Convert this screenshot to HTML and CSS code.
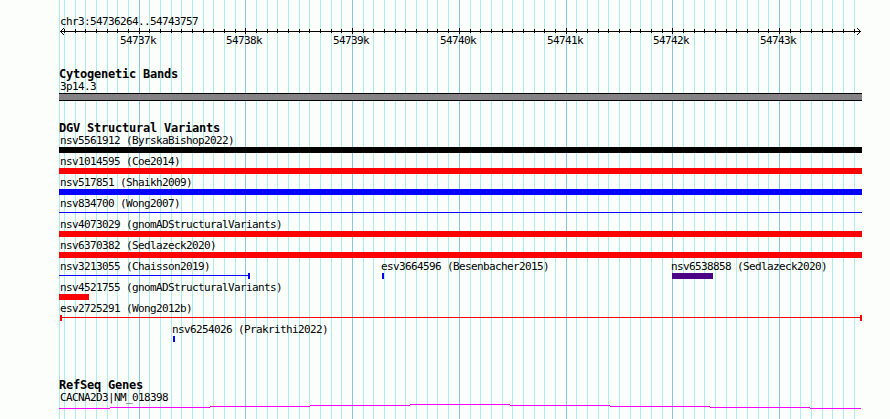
FILE: index.html
```
<!DOCTYPE html>
<html lang="en">
<head>
    <meta charset="UTF-8">
    <title>chr3:54736264..54743757</title>
    <link rel="stylesheet" href="styles.css">
</head>
<body>
    <div class="browser">
        <svg class="grid" width="890" height="419" shape-rendering="crispEdges"></svg>
        <header>
            <div class="label">chr3:54736264..54743757</div>
            <svg class="ruler" width="803" height="9" shape-rendering="crispEdges"></svg>
            <div class="scale"></div>
        </header>

        <section class="bands">
            <h2>Cytogenetic Bands</h2>
            <div class="label">3p14.3</div>
            <div class="band"></div>
        </section>

        <section class="variants">
            <h2>DGV Structural Variants</h2>
            <div class="row"><div class="label">nsv5561912 (ByrskaBishop2022)</div><div class="bar black"></div></div>
            <div class="row"><div class="label">nsv1014595 (Coe2014)</div><div class="bar red"></div></div>
            <div class="row"><div class="label">nsv517851 (Shaikh2009)</div><div class="bar blue"></div></div>
            <div class="row"><div class="label">nsv834700 (Wong2007)</div><div class="line thin blue"></div></div>
            <div class="row"><div class="label">nsv4073029 (gnomADStructuralVariants)</div><div class="bar red"></div></div>
            <div class="row"><div class="label">nsv6370382 (Sedlazeck2020)</div><div class="bar red"></div></div>
            <div class="row shared">
                <div><div class="label">nsv3213055 (Chaisson2019)</div><div class="span chaisson"><i class="line blue"></i><i class="cap blue"></i></div></div>
                <div><div class="label flush">esv3664596 (Besenbacher2015)</div><div class="cap blue"></div></div>
                <div><div class="label flush">nsv6538858 (Sedlazeck2020)</div><div class="bar indigo"></div></div>
            </div>
            <div class="row"><div class="label">nsv4521755 (gnomADStructuralVariants)</div><div class="bar short red"></div></div>
            <div class="row"><div class="label">esv2725291 (Wong2012b)</div><div class="span wong"><i class="cap red"></i><i class="line red"></i><i class="cap red"></i></div></div>
            <div class="row prakrithi"><div class="label flush">nsv6254026 (Prakrithi2022)</div><div class="cap blue"></div></div>
        </section>

        <section class="genes">
            <h2>RefSeq Genes</h2>
            <div class="label">CACNA2D3|NM_018398</div>
            <svg class="gene" width="803" height="5" shape-rendering="crispEdges">
                <path d="M0 4h51v1H0zM51 3h100v1H51zM151 2h100v1H151zM251 1h100v1H251zM351 0h100v1H351zM451 1h100v1H451zM551 2h100v1H551zM651 3h100v1H651zM751 4h51v1H751z"/>
            </svg>
        </section>
    </div>
    <script>
        const start = 54736264;
        const end = 54743757;
        const left = 59;
        const toX = bp => Math.round(60 + (bp - start) * 800 / (end - start + 1));
        const minor = [`M${left} 0h1v419h-1z`];
        const major = [];
        // axis line with an arrowhead at both ends
        const ticks = ['M1 4h801v1H1zM2 3h1v3H2zM3 2h1v1H3zM4 1h1v1H4zM3 6h1v1H3zM4 7h1v1H4zM800 3h1v3h-1zM799 2h1v1h-1zM798 1h1v1h-1zM799 6h1v1h-1zM798 7h1v1h-1z'];
        const labels = [];

        for (let bp = 54736300; bp < end; bp += 100) {
            const x = toX(bp);
            if (bp % 1000 === 0) {
                major.push(`M${x} 0h1v419h-1z`);
                ticks.push(`M${x - left} 1h1v6h-1z`);
                labels.push(`<span style="margin-left:${x - 19 - left - 107 * labels.length}px">${bp / 1000}k</span>`);
            } else {
                minor.push(`M${x} 0h1v419h-1z`);
                ticks.push(`M${x - left} 2h1v4h-1z`);
            }
        }

        document.querySelector('.grid').innerHTML =
            `<path class="minor" d="${minor.join('')}"/><path class="major" d="${major.join('')}"/>`;
        document.querySelector('.ruler').innerHTML = `<path d="${ticks.join('')}"/>`;
        document.querySelector('.scale').innerHTML = labels.join('');
    </script>
</body>
</html>
```
FILE: styles.css
```
body{
    margin: 0;
    background-color: #fcfefc;
    color: #000;
    font-family: 'DejaVu Sans Mono', monospace;
}

.browser{
    position: relative;
    box-sizing: border-box;
    width: 890px;
    height: 419px;
    padding: 15px 28px 0 59px;
    overflow: hidden;
}

.grid{
    position: absolute;
    top: 0;
    left: 0;
    z-index: -1;
}

.minor{
    fill: #aceeec;
}

.major{
    fill: #84cae4;
}

svg{
    display: block;
}

.label, .scale{
    height: 12px;
    line-height: 14px;
    font-size: 11px;
    letter-spacing: -0.622px;
    white-space: pre;
}

.label{
    padding-left: 1px;
}

.flush{
    padding-left: 0;
    margin-left: -1px;
}

h2{
    margin: 0;
    height: 12px;
    line-height: 12px;
    font-size: 12px;
    font-weight: 700;
    letter-spacing: -0.224px;
}

.scale{
    display: grid;
    grid-template-columns: repeat(7, 107px);
    margin-top: -2px;
}

.bands{
    padding-top: 22px;
}

.band{
    box-sizing: border-box;
    height: 8px;
    margin-top: 1px;
    background-color: #848284;
    border: solid #000;
    border-width: 1px 0;
}

.variants{
    padding-top: 21px;
}

.row{
    height: 21px;
}

.shared{
    display: grid;
    grid-template-columns: 323px 290px 1fr;
}

.bar{
    height: 6px;
    margin-top: 1px;
}

.short{
    width: 30px;
}

.shared .bar{
    width: 41px;
}

.cap{
    width: 2px;
    height: 6px;
    margin-top: 1px;
}

.line{
    height: 1px;
}

.thin{
    margin-top: 3px;
}

.span{
    display: flex;
    height: 6px;
    margin-top: 1px;
}

.span .cap{
    margin-top: 0;
}

.span .line{
    flex: 1;
    margin-top: 2px;
}

.chaisson{
    width: 191px;
}

.wong{
    margin-left: 1px;
}

.prakrithi{
    padding-left: 114px;
}

.black{
    background-color: #000;
}

.red{
    background-color: #fc0204;
}

.blue{
    background-color: #0402fc;
}

.indigo{
    background-color: #4c0284;
}

.genes{
    padding-top: 35px;
}

.gene{
    margin-top: 1px;
    fill: #fc02fc;
}
```
